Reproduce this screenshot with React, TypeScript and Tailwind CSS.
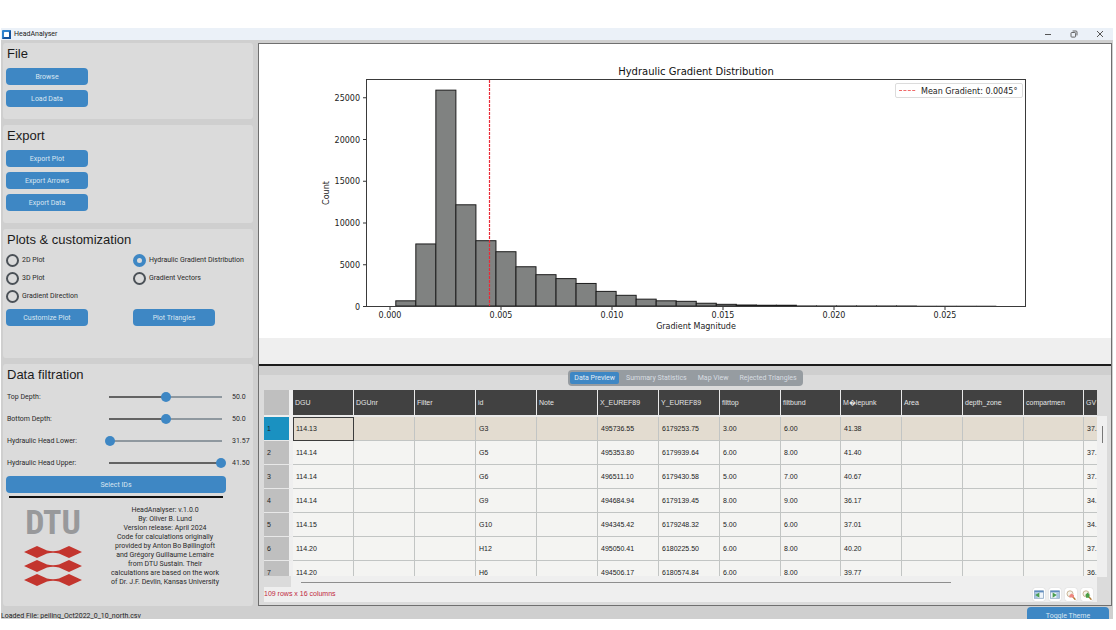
import { useState, type ReactNode } from "react";

const COLUMNS = [
  "DGU", "DGUnr", "Filter", "id", "Note", "X_EUREF89", "Y_EUREF89",
  "filttop", "filtbund", "M\uFFFDlepunk", "Area", "depth_zone", "compartmen", "GV",
];

const COLUMN_WIDTHS: Record<string, string> = {
  filtbund: "w-[60px]",
  compartmen: "w-[60px]",
  GV: "",
};

const ROWS: string[][] = [
  ["114.13", "", "", "G3", "", "495736.55", "6179253.75", "3.00", "6.00", "41.38", "", "", "", "37."],
  ["114.14", "", "", "G5", "", "495353.80", "6179939.64", "6.00", "8.00", "41.40", "", "", "", "37."],
  ["114.14", "", "", "G6", "", "496511.10", "6179430.58", "5.00", "7.00", "40.67", "", "", "", "37."],
  ["114.14", "", "", "G9", "", "494684.94", "6179139.45", "8.00", "9.00", "36.17", "", "", "", "34."],
  ["114.15", "", "", "G10", "", "494345.42", "6179248.32", "5.00", "6.00", "37.01", "", "", "", "34."],
  ["114.20", "", "", "H12", "", "495050.41", "6180225.50", "6.00", "8.00", "40.20", "", "", "", "37."],
  ["114.20", "", "", "H6", "", "494506.17", "6180574.84", "6.00", "8.00", "39.77", "", "", "", "36."],
];

const COUNTS = [
  620, 7430, 25850, 12120, 7820, 6500, 4700, 3750, 3280, 2700, 1750, 1280,
  820, 620, 560, 330, 200, 120, 90, 90, 40, 30, 20, 20, 20, 20, 10, 10, 10, 10,
];

function Card({ title, className, children }: { title: string; className?: string; children: ReactNode }) {
  return (
    <section className={`rounded-[3px] bg-[#dbdbdb] px-[3px] ${className ?? ""}`}>
      <h2 className="mb-[3px] pl-px font-['Liberation_Sans',sans-serif] text-[13px] leading-[22px] text-[#1b1b1b]">{title}</h2>
      {children}
    </section>
  );
}

function BlueButton({ children, wide }: { children: ReactNode; wide?: boolean }) {
  return (
    <button
      type="button"
      className={`block h-[17px] rounded-[4px] bg-[#3e87c4] text-center text-[7px] leading-[18px] text-[#d9e6f1] ${wide ? "w-[220px]" : "w-[82px]"}`}
    >
      {children}
    </button>
  );
}

function PlotRadio({ label, value, onSelect }: { label: string; value: string; onSelect: (v: string) => void }) {
  return (
    <label className="flex h-[13px] items-center gap-[3px] whitespace-nowrap text-[7px] leading-[13px] text-[#2a2a2a]">
      <input
        type="radio"
        name="plot"
        checked={value === label}
        onChange={() => onSelect(label)}
        className="size-[13px] shrink-0 appearance-none rounded-full border-2 border-[#4b5157] checked:border-4 checked:border-[#3e87c4]"
      />
      {label}
    </label>
  );
}

function FilterSlider({ label, min, max, initial, digits }: { label: string; min: number; max: number; initial: number; digits: number }) {
  const [value, setValue] = useState(initial);
  const share = ((value - min) / (max - min)) * 100;
  return (
    <label className="flex h-[22px] items-center text-[7px] text-[#2a2a2a]">
      <span className="w-[99px] pl-px">{label}</span>
      <input
        type="range"
        min={min}
        max={max}
        step="any"
        value={value}
        onChange={(e) => setValue(Number(e.target.value))}
        className="h-[10px] w-[121px] appearance-none bg-transparent bg-[length:113px_2px] bg-center bg-no-repeat [&::-webkit-slider-thumb]:size-[10px] [&::-webkit-slider-thumb]:appearance-none [&::-webkit-slider-thumb]:rounded-full [&::-webkit-slider-thumb]:bg-[#3e87c4]"
        style={{ backgroundImage: `linear-gradient(to right, #636363 ${share}%, #8f989f ${share}%)` }}
      />
      <span className="pl-[6px]">{value.toFixed(digits)}</span>
    </label>
  );
}

const x0 = 131;
const yBase = 262;
const perCount = 41.75 / 5000;
const binWidth = 20.03;

function Histogram() {
  return (
    <svg viewBox="0 0 852 294" className="block h-auto w-full bg-white" role="img" aria-label="Hydraulic Gradient Distribution">
      <g fill="#808281" stroke="#1c1c1c">
        {COUNTS.map((c, i) => (
          <rect
            key={i}
            x={136.8 + i * binWidth}
            y={yBase - c * perCount}
            width={binWidth}
            height={c * perCount}
            strokeWidth={c < 60 ? 0.3 : 1}
          />
        ))}
      </g>
      <line x1="230.5" x2="230.5" y1="36" y2="262" stroke="#ea2a38" strokeWidth="1.2" strokeDasharray="3 1" />
      <rect x="107.5" y="35.5" width="659" height="227" fill="none" stroke="#3a3a3a" strokeWidth="1" />
      <g stroke="#333" strokeWidth="1">
        {[0, 1, 2, 3, 4, 5].map((i) => (
          <g key={i}>
            <line x1="104" x2="107" y1={262.5 - i * 41.75} y2={262.5 - i * 41.75} />
            <line x1={x0 + i * 111} x2={x0 + i * 111} y1="263" y2="266" />
          </g>
        ))}
      </g>
      <g fontFamily="'DejaVu Sans', sans-serif" fill="#222" fontSize="8">
        {[0, 5000, 10000, 15000, 20000, 25000].map((v, i) => (
          <text key={v} x="101" y={265.5 - i * 41.75} textAnchor="end">{v}</text>
        ))}
        {["0.000", "0.005", "0.010", "0.015", "0.020", "0.025"].map((v, i) => (
          <text key={v} x={x0 + i * 111} y="274" textAnchor="middle">{v}</text>
        ))}
        <text x="437" y="285" textAnchor="middle">Gradient Magnitude</text>
        <text x="70" y="149" textAnchor="middle" transform="rotate(-90 70 149)">Count</text>
        <text x="437" y="31" textAnchor="middle" fontSize="10" fill="#111">Hydraulic Gradient Distribution</text>
        <rect x="636.5" y="39.5" width="127" height="14" rx="1.5" fill="#fff" stroke="#dcdcdc" />
        <line x1="640" x2="657" y1="46.5" y2="46.5" stroke="#f06a6a" strokeWidth="1.2" strokeDasharray="3 1.4" />
        <text x="662" y="49.5">Mean Gradient: 0.0045°</text>
      </g>
    </svg>
  );
}

const ICON_BUTTON = "flex h-[13px] w-[12px] items-center justify-center rounded-[2px] bg-white shadow-[0_0_1px_#bbb]";

function PanelIcon({ flip }: { flip?: boolean }) {
  return (
    <svg viewBox="0 0 10 9" className="h-[9px] w-[10px]">
      <rect x="0.5" y="0.9" width="9" height="7.4" fill="#eef4fa" stroke="#8aa6c2" strokeWidth="0.8" />
      <rect x="0.5" y="0.6" width="9" height="1.8" fill="#5f8cbe" />
      <rect x={flip ? 6.4 : 0.9} y="2.4" width="2.8" height="5.6" fill="#a9c6e2" />
      <path d={flip ? "M2.6 2.4 L6.8 5.1 L2.6 7.8 Z" : "M5.4 2.4 L1.2 5.1 L5.4 7.8 Z"} fill="#4a9e50" />
    </svg>
  );
}

function ZoomIcon({ plus }: { plus?: boolean }) {
  return (
    <svg viewBox="0 0 10 10" className="size-[10px]">
      <circle cx="4" cy="3.8" r="3" fill="#f6f3ea" stroke="#c2ad8c" strokeWidth="0.9" />
      <path d="M6.8 6.8 L9 9.2" stroke="#b07b35" strokeWidth="1.4" strokeLinecap="round" />
      {plus ? (
        <path d="M5.6 2.6 L8.4 5.4 H7.2 V7.8 H4 V5.4 H2.8 Z" fill="#4a9e45" />
      ) : (
        <path d="M3.4 5.2 L5.6 3.6 L8 5.2 V7.4 H3.4 Z" fill="#ee8880" />
      )}
    </svg>
  );
}

function DataTable() {
  return (
    <table className="w-full table-fixed border-separate border-spacing-0 font-['Liberation_Sans',sans-serif] text-[7px] leading-[10px]">
      <colgroup>
        <col className="w-[29px]" />
        {COLUMNS.map((c) => (
          <col key={c} className={COLUMN_WIDTHS[c] ?? "w-[61px]"} />
        ))}
      </colgroup>
      <thead>
        <tr className="h-[27px]">
          <th className="border-r-4 border-b-2 border-[#efefef] bg-[#bfbfbf] p-0" aria-label="Row" />
          {COLUMNS.map((c) => (
            <th
              key={c}
              scope="col"
              className="border-r border-b-2 border-[#eaeaea] bg-[#414141] p-0 pl-[2px] text-left font-normal whitespace-nowrap text-[#e4e4e4] last:border-r-0"
            >
              {c}
            </th>
          ))}
        </tr>
      </thead>
      <tbody>
        {ROWS.map((row, r) => (
          <tr key={r} className={`h-[24px] ${r === 0 ? "bg-[#e3dcd0]" : "bg-[#f4f4f2]"}`}>
            <th
              scope="row"
              className={`border-r-4 border-b border-r-[#efefef] border-b-[#e8e8e8] p-0 pl-[3px] text-left font-normal text-[#222] ${r === 0 ? "bg-[#1a91c1]" : "bg-[#bfbfbf]"}`}
            >
              {r + 1}
            </th>
            {row.map((cell, c) => (
              <td
                key={c}
                className={`border-r border-b border-[#c2c5c4] p-0 pl-[3px] whitespace-nowrap text-[#222] last:border-r-0 ${r === 0 && c === 0 ? "outline-1 -outline-offset-1 outline-[#3c3c3c]" : ""}`}
              >
                {cell}
              </td>
            ))}
          </tr>
        ))}
      </tbody>
    </table>
  );
}

const TABS = ["Data Preview", "Summary Statistics", "Map View", "Rejected Triangles"];

function Tabs() {
  const [active, setActive] = useState(TABS[0]);
  return (
    <div role="tablist" className="mx-auto -mt-[5px] flex h-4 w-fit items-center gap-[3px] rounded-[4px] bg-[#969ca1] px-[2px]">
      {TABS.map((t) => (
        <button
          key={t}
          role="tab"
          type="button"
          aria-selected={t === active}
          onClick={() => setActive(t)}
          className="h-3 rounded-[2px] px-1 text-[7px] leading-3 text-[#d8dde1] aria-selected:bg-[#3e87c4] aria-selected:text-[#e3edf5]"
        >
          {t}
        </button>
      ))}
    </div>
  );
}

function Logo() {
  return (
    <div className="flex w-[58px] flex-col items-center">
      <span className="font-['Liberation_Sans_Narrow','Roboto_Condensed','DejaVu_Sans_Condensed',sans-serif] text-[34px] leading-[32px] font-bold text-[#98999b]">DTU</span>
      <svg viewBox="0 0 58 40" className="mt-[8px] w-full" aria-hidden="true">
        {[0, 14, 28].map((y) => (
          <path
            key={y}
            transform={`translate(0 ${y})`}
            d="M0 6 L13 0 L23 4.6 Q29 6 35 4.6 L45 0 L58 6 L45 12 L35 7.4 Q29 6 23 7.4 L13 12 Z"
            fill="#c3352e"
          />
        ))}
      </svg>
    </div>
  );
}

const ABOUT = [
  "HeadAnalyser: v.1.0.0",
  "By: Oliver B. Lund",
  "Version release: April 2024",
  "Code for calculations originally",
  "provided by Anton Bo Bøllingtoft",
  "and Grégory Guillaume Lemaire",
  "from DTU Sustain. Their",
  "calculations are based on the work",
  "of Dr. J.F. Devlin, Kansas University",
];

export default function App() {
  const [plot, setPlot] = useState("Hydraulic Gradient Distribution");
  return (
    <div className="min-h-screen bg-white pt-[28px] pr-[3px] pb-[11px] pl-px font-['Roboto',sans-serif]">
      <header className="flex h-3 items-center bg-[#ebf1f8] pr-[9px] pl-px">
        <svg viewBox="0 0 9 9" className="size-[9px]" aria-hidden="true">
          <rect width="9" height="9" rx="1" fill="#2f82cc" />
          <path d="M9 0 V9 H0 Z" fill="#14539c" />
          <rect x="2" y="2" width="5" height="5" rx="0.5" fill="#fff" />
        </svg>
        <h1 className="pl-[3px] text-[7px] leading-3 text-[#222]">HeadAnalyser</h1>
        <div className="ml-auto flex gap-[18px] text-[#555]">
          <button type="button" aria-label="Minimize">
            <svg viewBox="0 0 8 8" className="size-2" fill="none" stroke="currentColor">
              <path d="M1 4.5 H7" />
            </svg>
          </button>
          <button type="button" aria-label="Restore">
            <svg viewBox="0 0 8 8" className="size-2" fill="none" stroke="currentColor" strokeWidth="0.9">
              <rect x="1" y="2.5" width="4.6" height="4.6" rx="0.8" />
              <path d="M2.6 1 H6 Q7 1 7 2 V5.4" />
            </svg>
          </button>
          <button type="button" aria-label="Close">
            <svg viewBox="0 0 8 8" className="size-2" fill="none" stroke="currentColor">
              <path d="M1 1 L7 7 M7 1 L1 7" />
            </svg>
          </button>
        </div>
      </header>

      <div className="bg-[#cfcfcf]">
        <div className="flex gap-[5px] pt-[3px] pr-px pl-[2px]">
          <aside className="flex w-[250px] shrink-0 flex-col gap-[6px]">
            <Card title="File" className="pb-[12px]">
              <div className="flex flex-col gap-[5px]">
                <BlueButton>Browse</BlueButton>
                <BlueButton>Load Data</BlueButton>
              </div>
            </Card>
            <Card title="Export" className="pb-[12px]">
              <div className="flex flex-col gap-[5px]">
                <BlueButton>Export Plot</BlueButton>
                <BlueButton>Export Arrows</BlueButton>
                <BlueButton>Export Data</BlueButton>
              </div>
            </Card>
            <Card title="Plots & customization" className="pb-[32px]">
              <div className="grid grid-cols-[127px_1fr] gap-y-[5px]">
                <PlotRadio label="2D Plot" value={plot} onSelect={setPlot} />
                <PlotRadio label="Hydraulic Gradient Distribution" value={plot} onSelect={setPlot} />
                <PlotRadio label="3D Plot" value={plot} onSelect={setPlot} />
                <PlotRadio label="Gradient Vectors" value={plot} onSelect={setPlot} />
                <div className="col-span-2">
                  <PlotRadio label="Gradient Direction" value={plot} onSelect={setPlot} />
                </div>
              </div>
              <div className="mt-[6px] grid grid-cols-[127px_1fr]">
                <BlueButton>Customize Plot</BlueButton>
                <BlueButton>Plot Triangles</BlueButton>
              </div>
            </Card>
            <Card title="Data filtration" className="grow pb-[12px]">
              <div className="-mt-[3px]">
                <FilterSlider label="Top Depth:" min={0} max={100} initial={50} digits={1} />
                <FilterSlider label="Bottom Depth:" min={0} max={100} initial={50} digits={1} />
                <FilterSlider label="Hydraulic Head Lower:" min={31.57} max={41.5} initial={31.57} digits={2} />
                <FilterSlider label="Hydraulic Head Upper:" min={31.57} max={41.5} initial={41.5} digits={2} />
              </div>
              <div className="mt-[2px]">
                <BlueButton wide>Select IDs</BlueButton>
              </div>
              <hr className="mt-[3px] ml-[3px] w-[214px] border-t-2 border-[#111]" />
              <div className="flex pt-[8px] pl-[18px]">
                <Logo />
                <p className="w-[166px] text-center text-[7px] leading-[9px] whitespace-nowrap text-[#2a2a2a]">
                  {ABOUT.map((line) => (
                    <span key={line} className="block">{line}</span>
                  ))}
                </p>
              </div>
            </Card>
          </aside>

          <main className="flex min-w-0 flex-1 flex-col border border-[#6f6f6f]">
            <Histogram />
            <div className="h-[26px] bg-[#efefef]" />
            <div className="h-[2px] bg-[#1c1c1c]" />
            <div className="flex grow flex-col pt-[9px]">
              <div className="flex grow flex-col bg-[#dbdbdb] pr-1 pb-[3px] pl-[5px]">
                <Tabs />
                <div className="mt-1 flex grow">
                  <div className="flex min-w-0 flex-1 flex-col bg-[#efefef]">
                    <div className="h-[186px] overflow-hidden">
                      <DataTable />
                    </div>
                    <div className="flex h-[11px]">
                      <div className="w-[27px] bg-[#dbdbdb]" />
                      <div className="mt-[6px] ml-[10px] h-px w-[650px] bg-[#8e8e8e]" />
                    </div>
                    <div className="flex h-[15px] items-center justify-between pr-1">
                      <p className="font-['Liberation_Sans',sans-serif] text-[7px] text-[#c0283c]">109 rows x 16 columns</p>
                      <div className="flex gap-1">
                        <button type="button" aria-label="Previous columns" className={ICON_BUTTON}><PanelIcon /></button>
                        <button type="button" aria-label="Next columns" className={ICON_BUTTON}><PanelIcon flip /></button>
                        <button type="button" aria-label="Zoom out" className={ICON_BUTTON}><ZoomIcon /></button>
                        <button type="button" aria-label="Zoom in" className={ICON_BUTTON}><ZoomIcon plus /></button>
                      </div>
                    </div>
                  </div>
                  <div className="mt-[26px] mb-[25px] flex w-[10px] justify-center bg-[#efefef] pt-[10px]">
                    <div className="h-[17px] w-px bg-[#777]" />
                  </div>
                </div>
              </div>
            </div>
          </main>
        </div>

        <footer className="flex h-[13px] items-start justify-between overflow-hidden pt-px pr-1">
          <p className="text-[7px] leading-[18px] text-[#222]">Loaded File: peiling_Oct2022_0_10_north.csv</p>
          <BlueButton>Toggle Theme</BlueButton>
        </footer>
      </div>
    </div>
  );
}
